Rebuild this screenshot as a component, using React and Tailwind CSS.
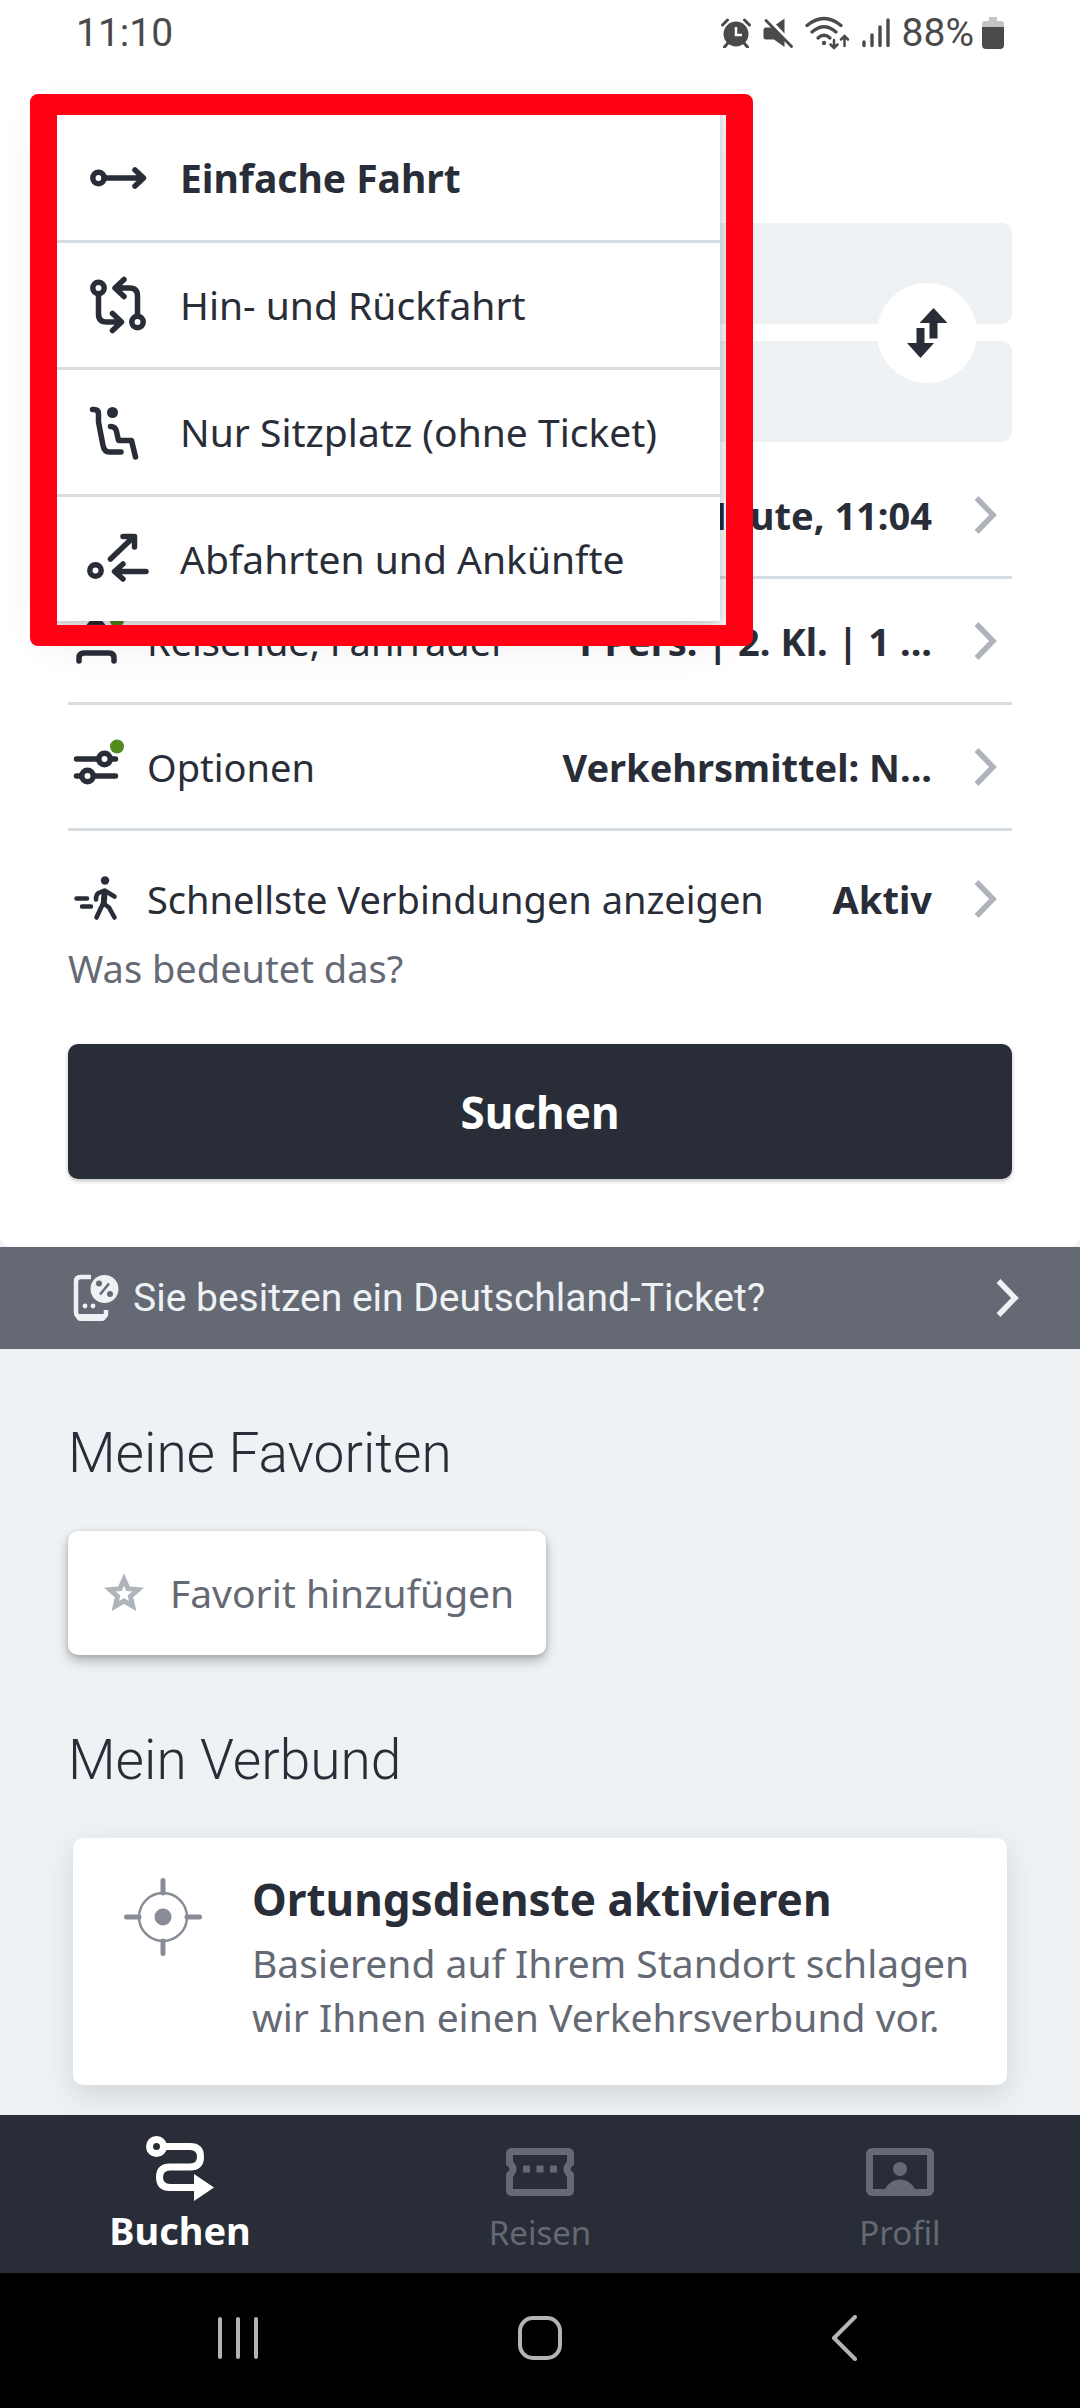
import { useState } from 'react';

const tripTypes = [
  { id: 'einfach', label: 'Einfache Fahrt', Icon: OneWayIcon },
  { id: 'hinrueck', label: 'Hin- und Rückfahrt', Icon: RoundTripIcon },
  { id: 'sitzplatz', label: 'Nur Sitzplatz (ohne Ticket)', Icon: SeatIcon },
  { id: 'abfahrten', label: 'Abfahrten und Ankünfte', Icon: DeparturesIcon },
];

const tabs = [
  { id: 'buchen', label: 'Buchen', Icon: BookIcon },
  { id: 'reisen', label: 'Reisen', Icon: TicketIcon },
  { id: 'profil', label: 'Profil', Icon: ProfileIcon },
];

/* ---------- Icons ---------- */

function MenuIcon({ children }) {
  return (
    <svg
      viewBox="0 0 56 56"
      className="size-14 shrink-0 overflow-visible"
      fill="none"
      stroke="currentColor"
      strokeWidth="5.5"
      strokeLinecap="round"
      strokeLinejoin="round"
      aria-hidden="true"
    >
      {children}
    </svg>
  );
}

function OneWayIcon() {
  return (
    <MenuIcon>
      <circle cx="8.5" cy="28" r="5.7" />
      <path d="M14 28H52M45 20l8.5 8-8.5 8" />
    </MenuIcon>
  );
}

function RoundTripIcon() {
  return (
    <MenuIcon>
      <circle cx="8.5" cy="11" r="5.7" />
      <circle cx="47.5" cy="45" r="5.7" />
      <path d="M8.5 17v20q0 8 8 8H31M22.5 36.5l9 8.5-9 8.5" />
      <path d="M47.5 39V19q0-8-8-8H26M34 2.5L25 11l9 8.5" />
    </MenuIcon>
  );
}

function SeatIcon() {
  return (
    <MenuIcon>
      <circle cx="22.5" cy="8.5" r="5.5" fill="currentColor" stroke="none" />
      <path d="M2.5 5.5h1.5q4.5 0 4.5 4.5v8l4.5 23.5q1.2 6.5 6.5 6.5H31" />
      <path d="M20.5 22.5q5 0 6 5l2 9H41.5L45.5 53" />
    </MenuIcon>
  );
}

function DeparturesIcon() {
  return (
    <MenuIcon>
      <circle cx="5.5" cy="39.5" r="5.7" />
      <path d="M20.5 28L43.5 6M33 5.5h11.5V16" />
      <path d="M56 40.5H25M33 33l-8.5 7.5L33 48" />
    </MenuIcon>
  );
}

function RowIcon({ dot, children }) {
  return (
    <svg
      viewBox="0 0 48 48"
      className="size-12 shrink-0 overflow-visible"
      fill="none"
      stroke="currentColor"
      strokeWidth="5.5"
      strokeLinecap="round"
      strokeLinejoin="round"
      aria-hidden="true"
    >
      {children}
      {dot && <circle cx="44" cy="3.5" r="7" fill="#508b1b" stroke="none" />}
    </svg>
  );
}

function TravellerIcon() {
  return (
    <RowIcon dot>
      <circle cx="23" cy="13" r="8" />
      <path d="M6 44v-3q0-5 5-5h25q5 0 5 5v3" />
    </RowIcon>
  );
}

function OptionsIcon() {
  return (
    <RowIcon dot>
      <path d="M3.5 16H25M38 16h4.5M3.5 33H8M21 33h21.5" />
      <circle cx="31.5" cy="16" r="5.7" />
      <circle cx="14.5" cy="33" r="5.7" />
    </RowIcon>
  );
}

function FastestIcon() {
  return (
    <RowIcon>
      <path d="M3.5 23.5h10.5M9 31.5h9" strokeWidth="4.5" />
      <circle cx="32" cy="5.5" r="4.2" fill="currentColor" stroke="none" />
      <path d="M23 24.5q0-5 2.5-6.5l6-2.5 10 6" strokeWidth="4.6" />
      <path d="M31 17l-1 11.5-6.5 14M30.5 28.5l5.5 4 5.5 10" strokeWidth="4.6" />
      <path d="M29 17l5.5 1-1 13-5-1z" fill="currentColor" stroke="none" />
    </RowIcon>
  );
}

function Chevron({ className }) {
  return (
    <svg viewBox="0 0 24 38" className={`h-[38px] w-6 shrink-0 ${className}`} fill="none" stroke="currentColor" strokeWidth="5.5" aria-hidden="true">
      <path d="M2.5 2L19 19L2.5 36" />
    </svg>
  );
}

function SwapIcon() {
  return (
    <svg viewBox="0 0 42 52" className="h-[52px] w-[42px]" fill="#282d37" aria-hidden="true">
      <path d="M27.5 1L41.5 16H31.5V31.5H23.5V16H13.5z" />
      <path d="M10.5 21h8v15h9.5L14.5 51L1 36h9.5z" />
    </svg>
  );
}

function DeutschlandTicketIcon() {
  return (
    <svg viewBox="0 0 48 48" className="size-12 shrink-0" fill="none" aria-hidden="true">
      <path d="M18 3H7.5Q3 3 3 7.5V38q0 5 5 5h21.5q3.5 0 3.5-4v-3" stroke="#eef2f5" strokeWidth="4.5" />
      <path d="M5 40h28v2q0 5-4 5H8q-5 0-5-5z" fill="#eef2f5" />
      <circle cx="12" cy="32" r="2.4" fill="#eef2f5" />
      <circle cx="20" cy="32" r="2.4" fill="#eef2f5" />
      <circle cx="31.5" cy="15" r="14" fill="#eef2f5" />
      <path d="M27 20.5L36 9.5" stroke="#646973" strokeWidth="2.5" />
      <circle cx="26" cy="9.5" r="3" fill="#646973" />
      <circle cx="37" cy="20" r="3" fill="#646973" />
    </svg>
  );
}

function StarIcon() {
  return (
    <svg viewBox="0 0 40 40" className="size-10 shrink-0" fill="none" stroke="#afb4bb" strokeWidth="5" aria-hidden="true">
      <path d="M20 6.5l4 9.2 10 .9-7.6 6.7 2.3 9.9L20 28l-8.7 5.2 2.3-9.9L6 16.6l10-.9z" />
    </svg>
  );
}

function LocationIcon() {
  return (
    <svg viewBox="0 0 78 78" className="size-[78px] shrink-0" fill="none" stroke="#878c96" aria-hidden="true">
      <circle cx="39" cy="39" r="24" strokeWidth="2.5" />
      <circle cx="39" cy="39" r="8.5" fill="#878c96" stroke="none" />
      <path d="M39 2.5V15M39 63v12.5M2.5 39H15M63 39h12.5" strokeWidth="5" strokeLinecap="round" />
    </svg>
  );
}

function BookIcon() {
  return (
    <svg viewBox="0 0 68 70" className="h-[70px] w-[68px]" fill="none" stroke="currentColor" strokeWidth="7" aria-hidden="true">
      <circle cx="10.5" cy="12.5" r="7" />
      <path d="M18 12.5h26q10.5 0 10.5 10.2T44 33H24q-10.5 0-10.5 10.2T24 53.5h26" />
      <path d="M48 40l20 13.5L48 67z" fill="currentColor" stroke="none" />
    </svg>
  );
}

function TicketIcon() {
  return (
    <svg viewBox="0 0 68 70" className="h-[70px] w-[68px]" fill="none" stroke="currentColor" strokeWidth="7" aria-hidden="true">
      <path d="M6 17.5h56q2.5 0 2.5 2.5v9q-3.5 3-3.5 6t3.5 6v15q0 2.5-2.5 2.5H6q-2.5 0-2.5-2.5V41Q7 38 7 35t-3.5-6v-9q0-2.5 2.5-2.5z" />
      <path d="M17 35h7M30.5 35h7M44 35h7" />
    </svg>
  );
}

function ProfileIcon() {
  return (
    <svg viewBox="0 0 68 70" className="h-[70px] w-[68px]" fill="none" stroke="currentColor" strokeWidth="7" aria-hidden="true">
      <rect x="3.5" y="17.5" width="61" height="41" rx="2.5" />
      <circle cx="34" cy="35" r="7" fill="currentColor" stroke="none" />
      <path d="M18 57q5-11.5 16-11.5T50 57z" fill="currentColor" stroke="none" />
    </svg>
  );
}

function AlarmIcon() {
  return (
    <svg viewBox="0 0 30 30" className="size-[30px]" aria-hidden="true">
      <circle cx="15" cy="16" r="12.5" fill="currentColor" />
      <path d="M1.5 7l5-5M28.5 7l-5-5M7 25l-3.5 4M23 25l3.5 4" stroke="currentColor" strokeWidth="3" strokeLinecap="round" />
      <path d="M15 9v8h6" stroke="#fff" strokeWidth="2.5" fill="none" />
    </svg>
  );
}

function MuteIcon() {
  return (
    <svg viewBox="0 0 30 30" className="size-[30px]" fill="currentColor" aria-hidden="true">
      <path d="M3 9.5h7l11.5 12.5V29L11 21.5H3q-2.5 0-2.5-2.5v-7Q.5 9.5 3 9.5z" />
      <path d="M13 6.5L21.5.5V15.5z" />
      <path d="M3 2.5L28.5 28.5" stroke="currentColor" strokeWidth="2.8" strokeLinecap="round" />
    </svg>
  );
}

function WifiIcon() {
  return (
    <svg viewBox="0 0 45 34" className="h-[34px] w-[45px]" fill="none" stroke="currentColor" strokeWidth="3.2" strokeLinecap="round" aria-hidden="true">
      <path d="M2 9.5q17-14 34 0M7 16q12-10.5 24 0M13 22q6-5.5 12 0" />
      <circle cx="19" cy="27" r="2.2" fill="currentColor" stroke="none" />
      <path d="M29 24v8M25.5 28.5L29 32l3.5-3.5M39.5 30v-9.5M36 23.5l3.5-3.5 3.5 3.5" strokeWidth="2.5" />
    </svg>
  );
}

function SignalIcon() {
  return (
    <svg viewBox="0 0 28 30" className="h-[30px] w-7" stroke="currentColor" strokeWidth="3.4" strokeLinecap="round" aria-hidden="true">
      <path d="M2 24v3.5M10 17v10.5M18 9v18.5M26 2v25.5" />
    </svg>
  );
}

function BatteryIcon() {
  return (
    <svg viewBox="0 0 22 32" className="h-8 w-[22px]" aria-hidden="true">
      <path d="M7 0h8v4h4q3 0 3 3v4H0V7q0-3 3-3h4z" fill="#c4c4c4" />
      <path d="M0 10h22v18q0 4-4 4H4q-4 0-4-4z" fill="currentColor" />
    </svg>
  );
}

/* ---------- Sections ---------- */

function StatusBar() {
  return (
    <div className="flex h-[66px] items-center justify-between px-[76px] font-[Roboto,sans-serif] text-[39px] leading-none text-[#4a4a4a]">
      <span>11:10</span>
      <div className="flex items-center gap-3">
        <AlarmIcon />
        <MuteIcon />
        <WifiIcon />
        <SignalIcon />
        <div className="flex items-center gap-2">
          <span>88%</span>
          <BatteryIcon />
        </div>
      </div>
    </div>
  );
}

function OptionRow({ icon, label, value, className }) {
  return (
    <button type="button" className={`flex w-full items-center pr-3.5 pl-[5px] text-left ${className}`}>
      {icon}
      {label && <span className="ml-[26px] whitespace-nowrap">{label}</span>}
      <span className="ml-auto font-bold whitespace-nowrap">{value}</span>
      <Chevron className="ml-[42px] text-[#afb4bb]" />
    </button>
  );
}

function SectionTitle({ children }) {
  return <h2 className="font-[Roboto,sans-serif] text-[55px] leading-[64px] font-light">{children}</h2>;
}

function TripTypeMenu() {
  const [selected, setSelected] = useState('einfach');

  return (
    <div className="absolute top-[105px] left-12 w-[672px] bg-white pt-[11px] text-[39px] shadow-[0_14px_44px_rgba(0,0,0,0.12),0_2px_10px_rgba(0,0,0,0.2)]">
      <ul className="divide-y-[3px] divide-[#d7dce1]">
        {tripTypes.map(({ id, label, Icon }) => (
          <li key={id}>
            <button
              type="button"
              onClick={() => setSelected(id)}
              className={`flex h-[124px] w-full items-center gap-[34px] pl-[42px] text-left whitespace-nowrap ${selected === id ? 'font-bold' : ''}`}
            >
              <Icon />
              {label}
            </button>
          </li>
        ))}
      </ul>
      {/* red marker around the menu */}
      <div className="pointer-events-none absolute -top-[11px] -right-[33px] -bottom-[25px] -left-[18px] rounded-lg border-x-[27px] border-y-[21px] border-[#ff0015]" />
    </div>
  );
}

export default function App() {
  const [activeTab, setActiveTab] = useState('buchen');

  return (
    <div className="relative flex min-h-screen flex-col bg-[#eef2f5] font-['Noto_Sans',sans-serif] text-[38px] leading-[54px] text-[#282d37]">
      <main className="flex-1">
        <section className="rounded-b-xl bg-white pb-[68px]">
          <StatusBar />

          <div className="px-[68px] pt-[157px]">
            <div className="relative flex flex-col gap-[17px]">
              <input aria-label="Von" className="h-[101px] rounded-[10px] bg-[#eef2f5] px-6" />
              <input aria-label="Nach" className="h-[101px] rounded-[10px] bg-[#eef2f5] px-6" />
              <button
                type="button"
                aria-label="Start und Ziel tauschen"
                className="absolute top-1/2 right-[35px] flex size-[100px] -translate-y-1/2 items-center justify-center rounded-full bg-white"
              >
                <SwapIcon />
              </button>
            </div>

            <div className="mt-[11px]">
              <OptionRow value="Heute, 11:04" className="h-[126px] border-b-[3px] border-[#d7dce1]" />
              <OptionRow
                icon={<TravellerIcon />}
                label="Reisende, Fahrräder"
                value="1 Pers. | 2. Kl. | 1 ..."
                className="h-[126px] border-b-[3px] border-[#d7dce1]"
              />
              <OptionRow
                icon={<OptionsIcon />}
                label="Optionen"
                value="Verkehrsmittel: N..."
                className="h-[126px] border-b-[3px] border-[#d7dce1]"
              />
              <OptionRow
                icon={<FastestIcon />}
                label="Schnellste Verbindungen anzeigen"
                value="Aktiv"
                className="mt-5 h-24"
              />
            </div>

            <a href="#info" className="block leading-[42px] text-[#646973]">Was bedeutet das?</a>

            <button
              type="button"
              className="mt-[55px] h-[135px] w-full rounded-[10px] bg-[#282d37] text-[44px] font-bold text-white shadow-[0_2px_4px_rgba(0,0,0,0.25)]"
            >
              Suchen
            </button>
          </div>
        </section>

        <a
          href="#deutschland-ticket"
          className="flex h-[102px] items-center bg-[#646973] pr-[60px] pl-[73px] font-[Roboto,sans-serif] text-[39px] text-[#eef2f5]"
        >
          <DeutschlandTicketIcon />
          <span className="ml-3">Sie besitzen ein Deutschland-Ticket?</span>
          <Chevron className="ml-auto" />
        </a>

        <section className="px-[68px] pt-[72px]">
          <SectionTitle>Meine Favoriten</SectionTitle>
          <button
            type="button"
            className="mt-[46px] flex h-[124px] items-center gap-[26px] rounded-[10px] bg-white pr-8 pl-9 text-[39px] text-[#646973] shadow-[0_6px_12px_rgba(0,0,0,0.26),0_1px_5px_rgba(0,0,0,0.12)]"
          >
            <StarIcon />
            Favorit hinzufügen
          </button>
        </section>

        <section className="px-[68px] pt-[73px] pb-[30px]">
          <SectionTitle>Mein Verbund</SectionTitle>
          <div className="mx-[5px] mt-[46px] flex gap-[50px] rounded-[10px] bg-white pt-[31px] pr-6 pb-[41px] pl-[51px] shadow-[0_10px_30px_rgba(0,0,0,0.12)]">
            <div className="pt-[9px]">
              <LocationIcon />
            </div>
            <div>
              <h3 className="text-[44px] leading-[60px] font-bold">Ortungsdienste aktivieren</h3>
              <p className="mt-[7px] text-[39px] text-[#646973]">
                Basierend auf Ihrem Standort schlagen wir Ihnen einen Verkehrsverbund vor.
              </p>
            </div>
          </div>
        </section>
      </main>

      <nav className="relative grid h-[158px] grid-cols-3 bg-[#282d37]">
        {tabs.map(({ id, label, Icon }) => (
          <button
            key={id}
            type="button"
            onClick={() => setActiveTab(id)}
            className={`flex flex-col items-center pt-[19px] ${activeTab === id ? 'font-bold text-white' : 'text-[#646973]'}`}
          >
            <Icon />
            <span className="leading-[52px]">
              <span className={activeTab === id ? 'text-[38px]' : 'text-[33px]'}>{label}</span>
            </span>
          </button>
        ))}
      </nav>

      {/* Android system buttons */}
      <div className="grid h-[135px] grid-cols-3 place-items-center bg-black px-[87px] pb-[5px] text-[#b4b4b4]">
        <button type="button" aria-label="Letzte Apps">
          <svg viewBox="0 0 46 46" className="size-[46px]" fill="none" stroke="currentColor" strokeWidth="4" strokeLinecap="round">
            <path d="M5 4v38M23 4v38M41 4v38" />
          </svg>
        </button>
        <button type="button" aria-label="Startseite">
          <svg viewBox="0 0 46 46" className="size-[46px]" fill="none" stroke="currentColor" strokeWidth="4">
            <rect x="3" y="3" width="40" height="40" rx="13" />
          </svg>
        </button>
        <button type="button" aria-label="Zurück">
          <svg viewBox="0 0 46 46" className="size-[46px]" fill="none" stroke="currentColor" strokeWidth="4" strokeLinecap="round" strokeLinejoin="round">
            <path d="M36 2L15 23l21 21" />
          </svg>
        </button>
      </div>

      <TripTypeMenu />
    </div>
  );
}
